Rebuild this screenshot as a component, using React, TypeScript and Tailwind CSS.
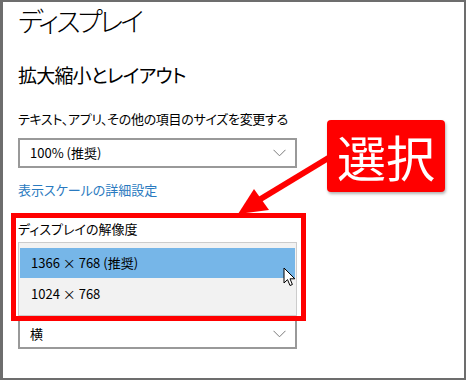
import React from 'react';

const jp = "font-['Noto_Sans_CJK_JP','Noto_Sans',sans-serif] [font-feature-settings:'palt']";

function Chevron() {
  return (
    <svg width="13" height="8" viewBox="0 0 13 8" className="shrink-0">
      <path d="M0.5 0.8 L6.5 6.8 L12.5 0.8" fill="none" stroke="#7a7a7a" strokeWidth="1" />
    </svg>
  );
}

function Cursor() {
  return (
    <svg width="13" height="20" viewBox="0 0 13 20">
      <path
        d="M1 1 L1 16 L4.5 12.6 L7 18.5 L9.4 17.5 L7 11.8 L11.8 11.8 Z"
        fill="#fff"
        stroke="#000"
        strokeWidth="1"
        strokeLinejoin="round"
      />
    </svg>
  );
}

export default function App() {
  return (
    <div className={`relative w-[466px] h-[380px] bg-white border-l-[3px] border-t-2 border-r-2 border-b-2 border-[#6d6d6d] overflow-hidden text-black ${jp}`}>
      <div className="pl-[15px] flex flex-col">
        {/* 見出し */}
        <h1 className="mt-[1px] h-[36px] leading-[36px] text-[27px] font-light tracking-[-3px]">ディスプレイ</h1>
        <h2 className="mt-[22px] h-[28px] leading-[28px] text-[19px] tracking-[-0.8px]">拡大縮小とレイアウト</h2>
        <p className="mt-[20px] h-[20px] leading-[20px] text-[13px] tracking-[-0.3px]">テキスト、アプリ、その他の項目のサイズを変更する</p>

        {/* 拡大縮小 */}
        <div className="mt-[9px] w-[279px] h-[30px] border-2 border-[#999999] flex items-center justify-between pl-[10px] pr-[9px]">
          <span className="text-[13px]">100% (推奨)</span>
          <Chevron />
        </div>

        <a className="mt-[12px] h-[20px] leading-[20px] text-[13px] text-[#2a7ac0]">表示スケールの詳細設定</a>

        {/* 解像度 */}
        <p className="mt-[19px] h-[20px] leading-[20px] text-[13px]">ディスプレイの解像度</p>
        <div className="mt-[3px] w-[279px] border border-[#cccccc] bg-[#f2f2f2] pt-[5px] pb-[5px] px-[1px] flex flex-col">
          <div className="h-[30px] bg-[#76b6e8] flex items-center pl-[11px] text-[13px]">1366 × 768 (推奨)</div>
          <div className="h-[32px] flex items-center pl-[11px] text-[13px]">1024 × 768</div>
        </div>

        {/* 向き */}
        <div className="mt-[2px] w-[279px] h-[31px] border-2 border-[#999999] flex items-center justify-between pl-[10px] pr-[9px]">
          <span className="text-[13px]">横</span>
          <Chevron />
        </div>
      </div>

      {/* 注釈 */}
      <div className="absolute left-[8px] top-[211px] w-[295px] h-[108px] border-[5px] border-[#ff0000]" />
      <div className="absolute left-[280px] top-[265px]">
        <Cursor />
      </div>
      <svg className="absolute left-0 top-0" width="466" height="380" viewBox="3 2 466 380">
        <line x1="330" y1="157" x2="254" y2="203" stroke="#ff0000" strokeWidth="6" />
        <polygon points="238,214 254,189 269,210" fill="#ff0000" />
      </svg>
      <div className="absolute left-[324px] top-[118px] w-[118px] h-[72px] rounded-[4px] bg-[#ff0000] shadow-[1px_2px_3px_rgba(0,0,0,0.3)] flex items-center justify-center">
        <span className="text-white text-[49px] leading-none pb-[2px]">選択</span>
      </div>
    </div>
  );
}
